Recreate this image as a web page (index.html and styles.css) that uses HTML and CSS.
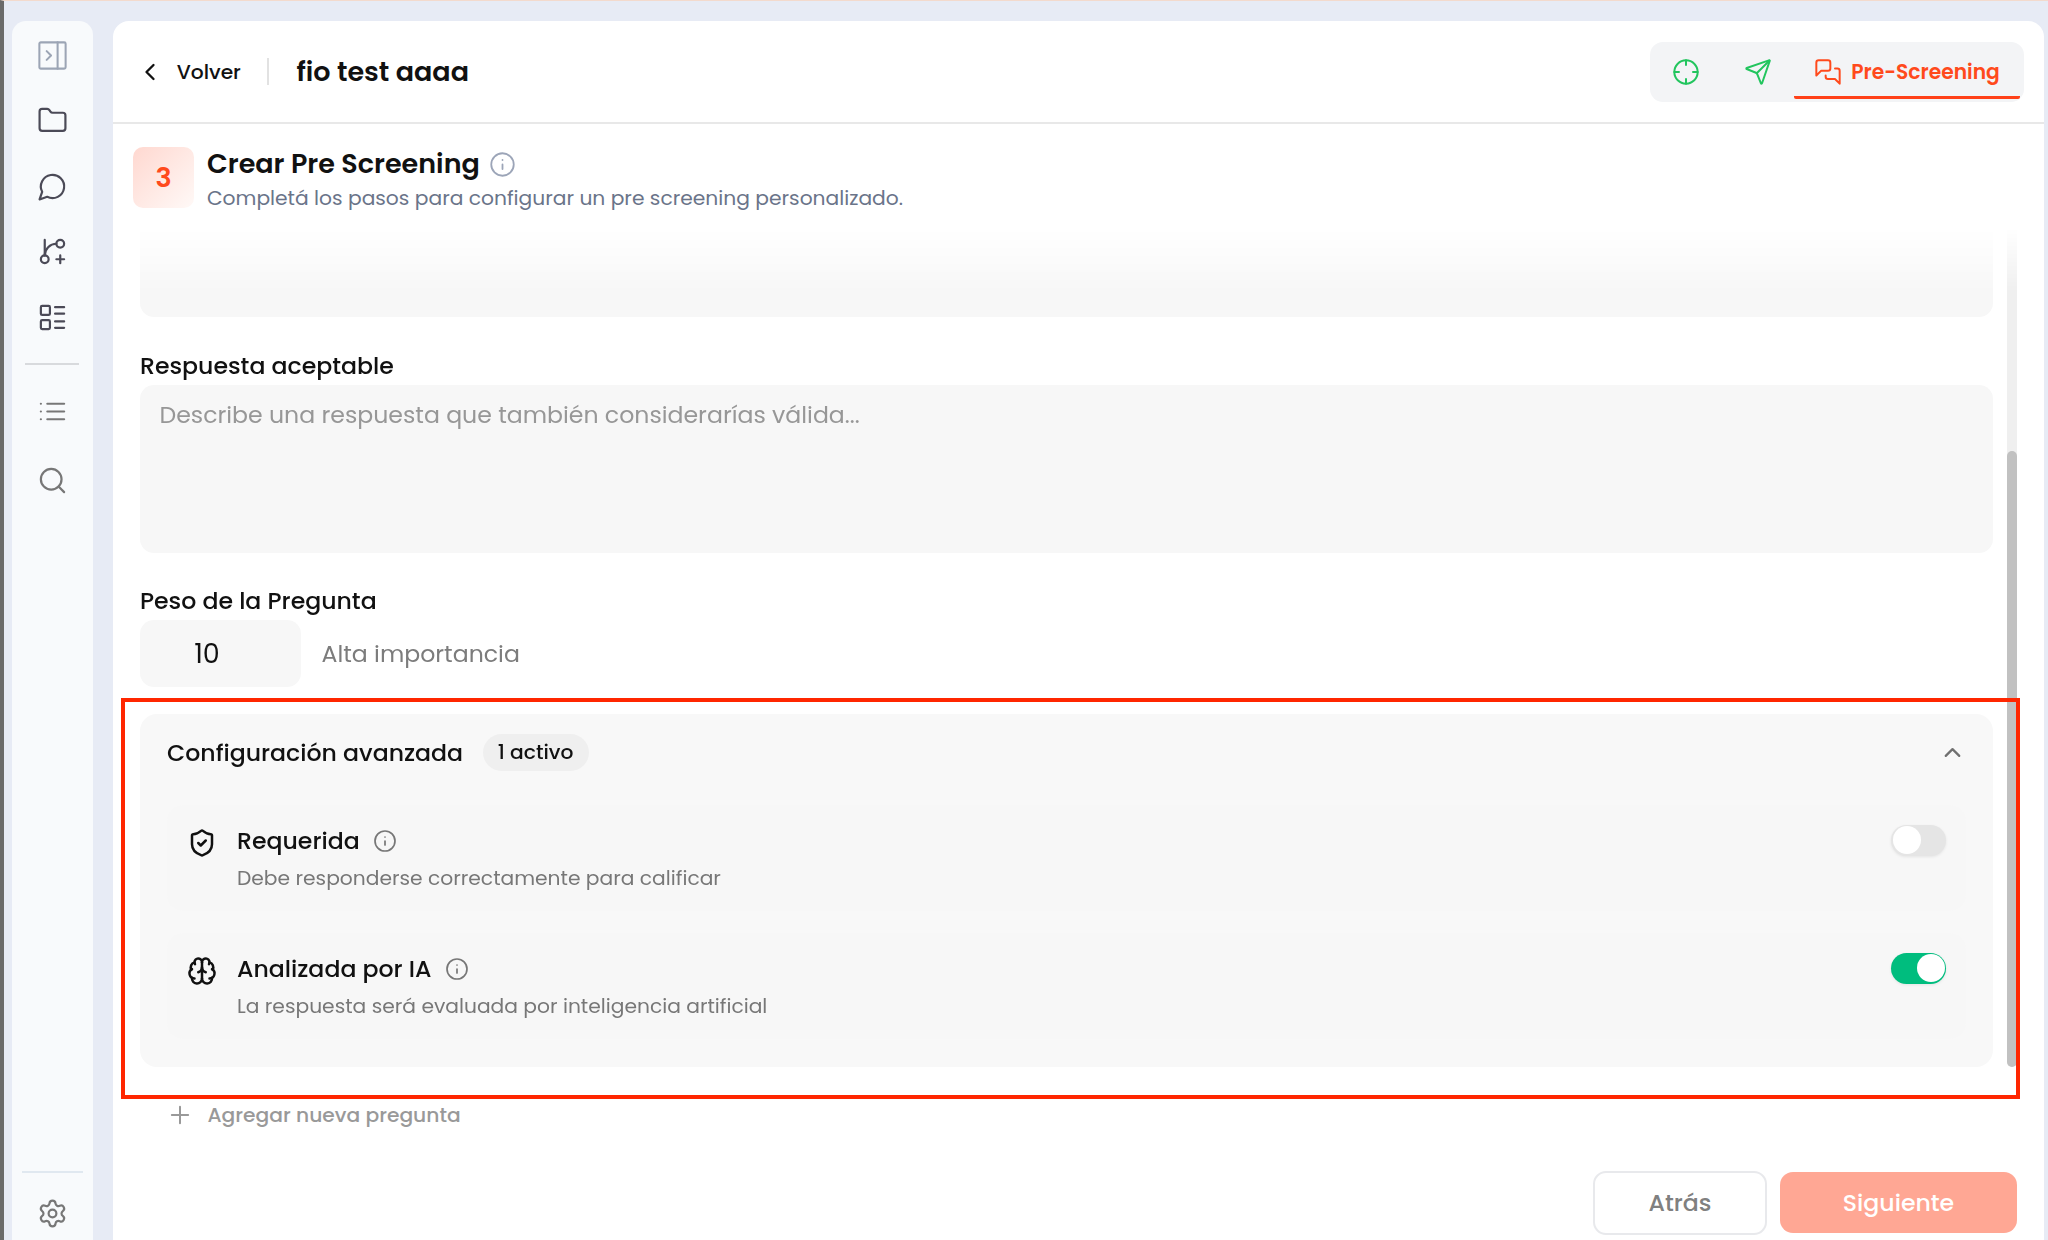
FILE: index.html
```html
<!DOCTYPE html>
<html lang="es">
<head>
<meta charset="utf-8">
<title>fio test aaaa</title>
<link rel="stylesheet" href="styles.css">
</head>
<body>
<div class="app">
  <nav class="sidebar">
    <svg class="icon icon-panel" viewBox="0 0 24 24"><rect x="3" y="3" width="18" height="18" rx="1"/><path d="M15.5 3v18"/><path d="m8 9 3 3-3 3"/></svg>
    <svg class="icon icon-folder" viewBox="0 0 24 24"><path d="M20 20a2 2 0 0 0 2-2V8a2 2 0 0 0-2-2h-7.900a2 2 0 0 1-1.690-.9L9.600 3.900A2 2 0 0 0 7.930 3H4a2 2 0 0 0-2 2v13a2 2 0 0 0 2 2Z"/></svg>
    <svg class="icon icon-chat" viewBox="0 0 24 24"><path d="M7.900 20A9 9 0 1 0 4 16.100L2 22Z"/></svg>
    <svg class="icon icon-branch" viewBox="0 0 24 24"><path d="M6 3v12"/><circle cx="18" cy="6" r="3"/><circle cx="6" cy="18" r="3"/><path d="M15 6a9 9 0 0 0-9 9"/><path d="M18 15v6M21 18h-6"/></svg>
    <svg class="icon icon-layout" viewBox="0 0 24 24"><rect x="3" y="3" width="7" height="7" rx="1"/><rect x="3" y="14" width="7" height="7" rx="1"/><path d="M14 4h7M14 9h7M14 15h7M14 20h7"/></svg>
    <hr class="rule">
    <svg class="icon icon-list" viewBox="0 0 24 24"><path d="M3 6h.01M3 12h.01M3 18h.01M8 6h13M8 12h13M8 18h13"/></svg>
    <svg class="icon icon-search" viewBox="0 0 24 24"><circle cx="11" cy="11" r="8"/><path d="m21 21-4.300-4.300"/></svg>
    <div class="sidebar-foot">
      <svg class="icon icon-gear" viewBox="0 0 24 24"><path d="M9.671 4.136a2.340 2.340 0 0 1 4.659 0 2.340 2.340 0 0 0 3.319 1.915 2.340 2.340 0 0 1 2.330 4.033 2.340 2.340 0 0 0 0 3.831 2.340 2.340 0 0 1-2.330 4.033 2.340 2.340 0 0 0-3.319 1.915 2.340 2.340 0 0 1-4.659 0 2.340 2.340 0 0 0-3.320-1.915 2.340 2.340 0 0 1-2.330-4.033 2.340 2.340 0 0 0 0-3.831A2.340 2.340 0 0 1 6.350 6.051a2.340 2.340 0 0 0 3.319-1.915"/><circle cx="12" cy="12" r="3"/></svg>
    </div>
  </nav>

  <main class="panel">
    <header class="topbar">
      <button class="back">
        <svg class="icon back-icon" viewBox="0 0 24 24"><path d="m15 18-6-6 6-6"/></svg>
        <span>Volver</span>
      </button>
      <h1 class="page-title">fio test aaaa</h1>
      <div class="tabs">
        <span class="tab"><svg class="icon" viewBox="0 0 24 24"><circle cx="12" cy="12" r="10"/><path d="M22 12h-4M6 12H2M12 6V2M12 22v-4"/></svg></span>
        <span class="tab"><svg class="icon" viewBox="0 0 24 24"><path d="M14.536 21.686a.5.5 0 0 0 .937-.024l6.500-19a.496.496 0 0 0-.635-.635l-19 6.500a.5.5 0 0 0-.024.937l7.930 3.180a2 2 0 0 1 1.112 1.110z"/><path d="m21.854 2.147-10.940 10.939"/></svg></span>
        <span class="tab tab-active"><svg class="icon" viewBox="0 0 24 24"><path d="M14 9a2 2 0 0 1-2 2H6l-4 4V4a2 2 0 0 1 2-2h8a2 2 0 0 1 2 2z"/><path d="M18 9h2a2 2 0 0 1 2 2v11l-4-4h-6a2 2 0 0 1-2-2v-1"/></svg><span>Pre-Screening</span></span>
      </div>
    </header>

    <section class="intro">
      <div class="step">3</div>
      <div>
        <h2 class="intro-title"><span>Crear Pre Screening</span><svg class="icon" viewBox="0 0 24 24"><circle cx="12" cy="12" r="10"/><path d="M12 16v-4M12 8h.01"/></svg></h2>
        <p class="intro-text">Completá los pasos para configurar un pre screening personalizado.</p>
      </div>
    </section>

    <div class="scroller">
      <div class="form">
        <div class="field-cut"></div>
        <div class="label label-answer">Respuesta aceptable</div>
        <div class="textarea"><span>Describe una respuesta que también considerarías válida...</span></div>
        <div class="label label-weight">Peso de la Pregunta</div>
        <div class="weight">
          <div class="number">10</div>
          <span class="weight-text">Alta importancia</span>
        </div>
        <section class="advanced">
          <div class="advanced-head">
            <span class="advanced-title">Configuración avanzada</span>
            <span class="pill">1 activo</span>
            <svg class="icon chevron" viewBox="0 0 24 24"><path d="m18 15-6-6-6 6"/></svg>
          </div>
          <div class="option">
            <svg class="icon option-icon" viewBox="0 0 24 24"><path d="M20 13c0 5-3.500 7.500-7.660 8.950a1 1 0 0 1-.670-.010C7.500 20.500 4 18 4 13V6a1 1 0 0 1 1-1c2 0 4.500-1.200 6.240-2.720a1.170 1.170 0 0 1 1.520 0C14.510 3.810 17 5 19 5a1 1 0 0 1 1 1z"/><path d="m9 12 2 2 4-4"/></svg>
            <div class="option-body">
              <div class="option-title"><span>Requerida</span><svg class="icon" viewBox="0 0 24 24"><circle cx="12" cy="12" r="10"/><path d="M12 16v-4M12 8h.01"/></svg></div>
              <div class="option-text">Debe responderse correctamente para calificar</div>
            </div>
            <div class="switch"></div>
          </div>
          <div class="option">
            <svg class="icon option-icon" viewBox="0 0 24 24"><path d="M12 18V5"/><path d="M15 13a4.170 4.170 0 0 1-3-4 4.170 4.170 0 0 1-3 4"/><path d="M17.598 6.500A3 3 0 1 0 12 5a3 3 0 1 0-5.598 1.500"/><path d="M17.997 5.125a4 4 0 0 1 2.526 5.770"/><path d="M18 18a4 4 0 0 0 2-7.464"/><path d="M19.967 17.483A4 4 0 1 1 12 18a4 4 0 1 1-7.967-.517"/><path d="M6 18a4 4 0 0 1-2-7.464"/><path d="M6.003 5.125a4 4 0 0 0-2.526 5.770"/></svg>
            <div class="option-body">
              <div class="option-title"><span>Analizada por IA</span><svg class="icon" viewBox="0 0 24 24"><circle cx="12" cy="12" r="10"/><path d="M12 16v-4M12 8h.01"/></svg></div>
              <div class="option-text">La respuesta será evaluada por inteligencia artificial</div>
            </div>
            <div class="switch switch-on"></div>
          </div>
        </section>
      </div>
      <div class="track"><div class="thumb"></div></div>
    </div>

    <button class="add">
      <svg class="icon" viewBox="0 0 24 24"><path d="M5 12h14M12 5v14"/></svg>
      <span>Agregar nueva pregunta</span>
    </button>

    <footer class="actions">
      <button class="btn btn-back"><span>Atrás</span></button>
      <button class="btn btn-next"><span>Siguiente</span></button>
    </footer>
  </main>
</div>
<div class="highlight"></div>
</body>
</html>
```
FILE: styles.css
```css
* { box-sizing: border-box; margin: 0; padding: 0; }

body {
  width: 2048px;
  height: 1240px;
  overflow: hidden;
  background: #e7ebf5;
  color: #111;
  font-family: Poppins, Inter, "Noto Sans", sans-serif;
}

button { border: 0; background: none; font: inherit; color: inherit; }

.icon {
  display: block;
  flex: none;
  fill: none;
  stroke: currentColor;
  stroke-width: 1.700;
  stroke-linecap: round;
  stroke-linejoin: round;
}

.app {
  display: flex;
  height: 1240px;
  padding: 19.500px 4.500px 0 8px;
  border-top: 1.500px solid #f3dacd;
  border-left: 4px solid #6a6a6a;
}

/* Sidebar */
.sidebar {
  display: flex;
  flex-direction: column;
  align-items: center;
  width: 81px;
  margin-right: 20px;
  padding-right: 1px;
  border-radius: 14px 14px 0 0;
  background: #f8fafc;
  color: #4b4a57;
}
.icon-panel { width: 35px; height: 35px; margin-top: 17px; stroke-width: 1.400; color: #9ca5b5; }
.icon-folder { width: 31px; height: 31px; margin-top: 32px; }
.icon-chat { width: 31px; height: 31px; margin-top: 35px; }
.icon-branch { width: 31px; height: 31px; margin-top: 34px; }
.icon-layout { width: 31px; height: 31px; margin-top: 35px; }
.rule { width: 54px; height: 2px; border: 0; margin-top: 30px; background: #d8dadd; }
.icon-list { width: 31px; height: 31px; margin-top: 31px; color: #777; }
.icon-search { width: 31px; height: 31px; margin-top: 38px; color: #777; }
.sidebar-foot {
  display: flex;
  justify-content: center;
  width: 61px;
  height: 69px;
  margin-top: auto;
  padding-top: 25px;
  border-top: 2px solid #e0e8f0;
  color: #777;
}
.icon-gear { width: 31px; height: 31px; }

/* Main panel */
.panel {
  display: flex;
  flex-direction: column;
  flex: 1;
  border-radius: 16px 16px 0 0;
  background: #fff;
}
.topbar {
  display: flex;
  align-items: center;
  height: 103px;
  padding: 1px 20px 0 23px;
  border-bottom: 2px solid #e8e8e8;
}
.back {
  display: flex;
  align-items: center;
  height: 27px;
  width: 133px;
  border-right: 2px solid #e2e2e2;
  font-size: 20.240px;
  font-weight: 500;
}
.back-icon { width: 28px; height: 28px; margin-right: 12.700px; stroke-width: 2; }
.page-title { margin-left: 27.500px; font-size: 27px; font-weight: 600; white-space: nowrap; }
.tabs {
  display: flex;
  justify-content: flex-end;
  width: 374px;
  height: 60px;
  margin-left: auto;
  padding: 3px 3.500px 3px 0;
  border-radius: 13px;
  background: #f3f4f6;
  color: #22c55e;
}
.tab { display: flex; flex: none; align-items: center; justify-content: center; width: 72px; }
.tab .icon { width: 28px; height: 28px; }
.tab-active {
  width: 226px;
  height: 54px;
  padding-top: 3px;
  border-bottom: 3px solid #ff4119;
  border-radius: 2px;
  color: #ff4a1c;
  font-size: 20.240px;
  font-weight: 600;
}
.tab-active .icon { margin-right: 9px; }

.intro { display: flex; height: 100px; padding: 23px 0 0 20px; }
.step {
  width: 61px;
  height: 61px;
  margin-right: 13px;
  border-radius: 10px;
  background: linear-gradient(135deg, #ffd8d0, #fff9f7);
  color: #ff4a1c;
  font-size: 27px;
  font-weight: 600;
  line-height: 61px;
  text-align: center;
}
.intro-title {
  display: flex;
  align-items: center;
  gap: 9px;
  height: 35px;
  font-size: 27px;
  font-weight: 600;
}
.intro-title .icon { width: 27px; height: 27px; stroke-width: 1.600; color: #9ca5b8; }
.intro-text { color: #6a7489; font-size: 20.240px; line-height: 32px; }

/* Scrolling form */
.scroller {
  display: flex;
  height: 843px;
  padding: 0 26.500px 0 27px;
  -webkit-mask-image: linear-gradient(transparent 4px, #000 68px);
  mask-image: linear-gradient(transparent 4px, #000 68px);
}
.form { width: 1853px; }
.field-cut { height: 93px; border-radius: 0 0 14px 14px; background: #f7f7f7; }
.label { height: 30px; font-size: 23.620px; font-weight: 500; line-height: 30px; }
.label-answer { margin: 34px 0 4px; }
.label-weight { margin: 33px 0 4px; }
.textarea {
  height: 168px;
  padding: 15px 19.500px;
  border-radius: 14px;
  background: #f7f7f7;
  color: #979797;
  font-size: 23.620px;
  line-height: 30px;
}
.weight { display: flex; align-items: center; gap: 20.500px; color: #7c7c7c; font-size: 23.620px; }
.number {
  width: 161px;
  height: 67px;
  padding-right: 27px;
  border-radius: 14px;
  background: #f7f7f7;
  color: #111;
  font-size: 27px;
  line-height: 67px;
  text-align: center;
}
.advanced {
  height: 353px;
  margin-top: 27px;
  padding: 0 27px;
  border-radius: 17px;
  background: #f8f8f8;
}
.advanced-head { display: flex; align-items: center; height: 91px; padding-bottom: 14px; }
.advanced-title { margin-right: 19.500px; font-size: 23.620px; font-weight: 500; }
.pill {
  width: 106px;
  height: 37px;
  border-radius: 19px;
  background: #efefef;
  font-size: 20.240px;
  font-weight: 500;
  line-height: 37px;
  text-align: center;
}
.chevron { width: 27px; height: 27px; margin: 1px 0 0 auto; stroke-width: 2; color: #707070; }
.option {
  display: flex;
  height: 106px;
  padding: 21px 20px 0;
  border-radius: 16px;
  background: #f7f7f7;
}
.option + .option { margin-top: 22px; }
.option-icon { width: 30px; height: 30px; margin: 2px 20px 0 0; stroke-width: 2; }
.option-title { display: flex; align-items: center; gap: 13.500px; height: 30px; margin-bottom: 10px; font-size: 23.620px; font-weight: 500; }
.option-title .icon { width: 24px; height: 24px; color: #777; }
.option-text { color: #777; font-size: 20.240px; line-height: 24px; }
.switch {
  width: 55px;
  height: 31px;
  margin: -1px 0 0 auto;
  padding: 1.500px 2px;
  border-radius: 16px;
  background: #e5e5e5;
  box-shadow: 0 1px 3px rgba(0, 0, 0, .08);
}
.switch::before { content: ""; display: block; width: 28px; height: 28px; border-radius: 50%; background: #fff; }
.switch-on { background: #00bd7e; }
.switch-on::before { margin-left: auto; margin-right: -1px; }
.track { width: 10.500px; height: 843px; margin-left: auto; border-radius: 6px; background: #efefef; }
.thumb { height: 616px; margin-top: 227px; border-radius: 6px; background: #c1c1c1; }

.add {
  display: flex;
  align-items: center;
  gap: 13.500px;
  height: 34px;
  margin: 31px 0 0 53px;
  color: #999;
  font-size: 20.240px;
  font-weight: 500;
}
.add .icon { width: 28px; height: 28px; }

.actions { display: flex; align-items: center; justify-content: flex-end; gap: 13px; margin-top: 39px; padding-right: 26.500px; }
.btn { border-radius: 13px; font-size: 23.620px; font-weight: 500; }
.btn-back { width: 174px; height: 64px; border: 2px solid #e8e9ec; color: #808080; }
.btn-next { width: 237px; height: 61px; background: #ffa794; color: #fff; }

/* Marked region over the advanced settings */
.highlight {
  position: absolute;
  left: 121px;
  top: 698px;
  width: 1899px;
  height: 401px;
  border: 4px solid #ff2600;
}
```
